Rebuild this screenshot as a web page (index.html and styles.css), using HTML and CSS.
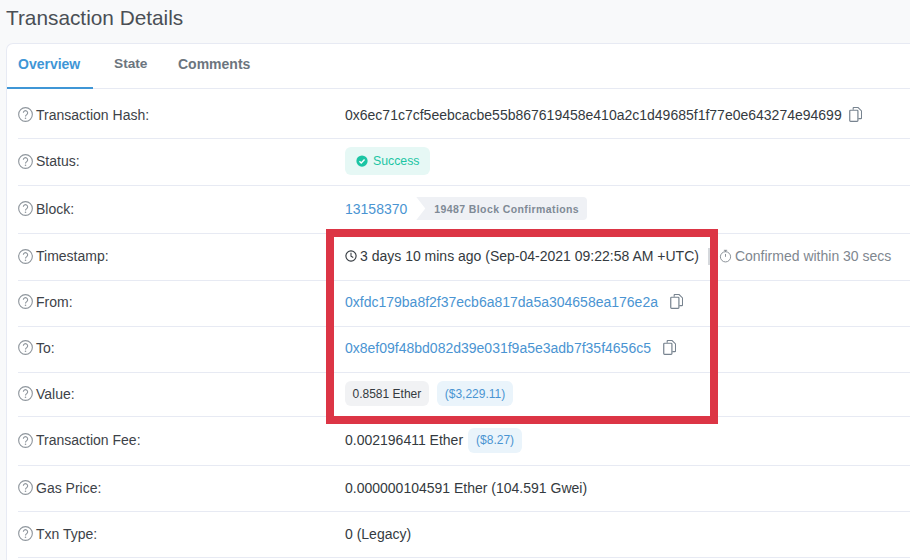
FILE: index.html
```html
<!DOCTYPE html>
<html lang="en">
<head>
<meta charset="utf-8">
<title>Transaction Details</title>
<link rel="stylesheet" href="styles.css">
</head>
<body>
<svg class="defs" width="0" height="0" aria-hidden="true">
  <symbol id="help" viewBox="0 0 16 16"><circle cx="8" cy="8" r="7.3" fill="none" stroke="currentColor" stroke-width="1.2"/><path d="M5.7 6.2a2.3 2.3 0 1 1 3.6 1.9c-.9.6-1.3 1-1.3 1.9" fill="none" stroke="currentColor" stroke-width="1.2"/><circle cx="8" cy="12" r=".85" fill="currentColor"/></symbol>
  <symbol id="copy" viewBox="0 0 14 16"><path d="M4.5 3V1.2a.7.7 0 0 1 .7-.7h4.6l3.7 3.7v7.6a.7.7 0 0 1-.7.7H10" fill="none" stroke="currentColor" stroke-width="1.2"/><rect x=".8" y="3.4" width="8.8" height="12" rx=".9" fill="none" stroke="currentColor" stroke-width="1.3"/></symbol>
</svg>
<main class="page">
  <h1 class="title">Transaction Details</h1>
  <section class="card">
    <nav class="tabs">
      <a class="tab tab-active">Overview</a>
      <a class="tab">State</a>
      <a class="tab">Comments</a>
    </nav>
    <div class="rows">
      <div class="row h50 low">
        <div class="label"><svg class="help"><use href="#help"/></svg>Transaction Hash:</div>
        <div class="value"><span>0x6ec71c7cf5eebcacbe55b867619458e410a2c1d49685f1f77e0e643274e94699</span><svg class="copy"><use href="#copy"/></svg></div>
      </div>
      <div class="row h47 up1">
        <div class="label"><svg class="help"><use href="#help"/></svg>Status:</div>
        <div class="value"><span class="badge-success"><svg class="check" viewBox="0 0 16 16"><circle cx="8" cy="8" r="7.5" fill="currentColor"/><path d="M4.6 8.2l2.4 2.4 4.4-4.6" fill="none" stroke="#fff" stroke-width="1.9"/></svg>Success</span></div>
      </div>
      <div class="row h48 up1">
        <div class="label"><svg class="help"><use href="#help"/></svg>Block:</div>
        <div class="value"><a class="link">13158370</a><span class="confirm">19487 Block Confirmations</span></div>
      </div>
      <div class="row h47 up1">
        <div class="label"><svg class="help"><use href="#help"/></svg>Timestamp:</div>
        <div class="value">
          <svg class="clock" viewBox="0 0 16 16"><circle cx="8" cy="8" r="6.8" fill="none" stroke="currentColor" stroke-width="1.5"/><path d="M8 3.8V8.3l3 1.7" fill="none" stroke="currentColor" stroke-width="1.4"/></svg>
          <span>3 days 10 mins ago (Sep-04-2021 09:22:58 AM +UTC)</span>
          <span class="divider"></span>
          <span class="muted"><svg class="timer" viewBox="0 0 16 16"><circle cx="8" cy="9" r="6.3" fill="none" stroke="currentColor" stroke-width="1.1"/><path d="M6 1h4M8 1v2M8 5.5V9" fill="none" stroke="currentColor" stroke-width="1.1"/></svg>Confirmed within 30 secs</span>
        </div>
      </div>
      <div class="row h46 up2">
        <div class="label"><svg class="help"><use href="#help"/></svg>From:</div>
        <div class="value"><a class="link">0xfdc179ba8f2f37ecb6a817da5a304658ea176e2a</a><svg class="copy copy-far"><use href="#copy"/></svg></div>
      </div>
      <div class="row h46 up2">
        <div class="label"><svg class="help"><use href="#help"/></svg>To:</div>
        <div class="value"><a class="link">0x8ef09f48bd082d39e031f9a5e3adb7f35f4656c5</a><svg class="copy copy-far"><use href="#copy"/></svg></div>
      </div>
      <div class="row h44 up1">
        <div class="label"><svg class="help"><use href="#help"/></svg>Value:</div>
        <div class="value"><span class="pill pill-grey">0.8581 Ether</span><span class="pill pill-blue">($3,229.11)</span></div>
      </div>
      <div class="row h49 up1">
        <div class="label"><svg class="help"><use href="#help"/></svg>Transaction Fee:</div>
        <div class="value"><span>0.002196411 Ether</span><span class="pill pill-blue pill-fee">($8.27)</span></div>
      </div>
      <div class="row h46 up1">
        <div class="label"><svg class="help"><use href="#help"/></svg>Gas Price:</div>
        <div class="value">0.000000104591 Ether (104.591 Gwei)</div>
      </div>
      <div class="row h46 up1">
        <div class="label"><svg class="help"><use href="#help"/></svg>Txn Type:</div>
        <div class="value">0 (Legacy)</div>
      </div>
    </div>
  </section>
</main>
<div class="highlight"></div>
</body>
</html>
```
FILE: styles.css
```css
* { box-sizing: border-box; }
html, body { margin: 0; height: 100%; }
html { overflow: hidden; }
body {
  width: 910px;
  height: 560px;
  overflow: hidden;
  position: relative;
  background: #f8f9fa;
  color: #343a40;
  font-family: "Liberation Sans", Arial, sans-serif;
  font-size: 14px;
}
.defs { position: absolute; }
.page { padding: 5px 0 0 6px; height: 560px; }
.title {
  margin: 0;
  height: 38px;
  font-size: 20.8px;
  line-height: 26px;
  font-weight: 400;
  color: #4a4f55;
}
.card {
  width: 904px;
  height: 517px;
  background: #fff;
  border: 1px solid #e7eaf3;
  border-right: 0;
  border-bottom: 0;
  border-radius: 7px 0 0 0;
}
.tabs {
  display: flex;
  height: 45px;
  border-bottom: 1px solid #e7eaf3;
}
.tab {
  padding: 12px 0 0 11px;
  width: 86px;
  font-size: 14px;
  font-weight: 700;
  color: #6c757e;
  white-space: nowrap;
}
.tab:nth-child(2) { width: 65px; padding-left: 21px; font-size: 13.7px; }
.tab:nth-child(3) { width: 100px; padding-left: 20px; }
.tab-active { color: #3f96d6; border-bottom: 2px solid #3f96d6; height: 45px; }
.rows { padding-left: 11px; }
.row {
  display: flex;
  align-items: center;
  border-bottom: 1px solid #e7eaf3;
}
.low { padding-top: 2px; }
.up1 { padding-bottom: 2px; }
.up2 { padding-bottom: 4px; }
.h44 { height: 44px; }
.h46 { height: 46px; }
.h47 { height: 47px; }
.h48 { height: 48px; }
.h49 { height: 49px; }
.h50 { height: 50px; }
.label {
  display: flex;
  align-items: center;
  width: 327px;
  color: #3d4248;
}
.help { width: 15px; height: 15px; margin-right: 3px; color: #8f969d; flex: none; }
.value { display: flex; align-items: center; color: #343a40; white-space: nowrap; }
.link { color: #4a94d2; }
.copy { width: 13px; height: 15px; margin-left: 7px; color: #77838f; }
.copy-far { margin-left: 12px; }
.badge-success {
  display: inline-flex;
  align-items: center;
  height: 28px;
  padding: 0 11px;
  border-radius: 6px;
  background: #e6f8f5;
  color: #1cc5a4;
  font-size: 12.3px;
}
.check { width: 12px; height: 12px; margin-right: 5px; }
.confirm {
  display: inline-flex;
  align-items: center;
  height: 23px;
  margin-left: 9px;
  padding: 0 8px 0 18px;
  border-radius: 0 4px 4px 0;
  background: #eff1f5;
  clip-path: polygon(0 0, 100% 0, 100% 100%, 0 100%, 9px 50%);
  color: #7f8a96;
  font-size: 10.5px;
  font-weight: 700;
  letter-spacing: .4px;
}
.clock { width: 12px; height: 12px; margin-right: 3px; }
.divider { width: 2px; height: 17px; margin: 0 9px 0 9px; background: #d5d8dc; }
.muted { display: inline-flex; align-items: center; color: #80878f; }
.timer { width: 13px; height: 14px; margin-right: 3px; }
.pill {
  display: inline-flex;
  align-items: center;
  height: 25px;
  padding: 0 7.5px;
  border-radius: 6px;
  font-size: 12px;
}
.pill-grey { background: #f1f2f4; color: #343a40; }
.pill-blue { margin-left: 8px; padding: 0 8px; background: #eaf4fb; color: #4a94d2; }
.pill-fee { margin-left: 5px; }
.highlight {
  position: absolute;
  left: 326px;
  top: 229px;
  width: 392px;
  height: 195px;
  border: 8px solid #dc3545;
}
```
